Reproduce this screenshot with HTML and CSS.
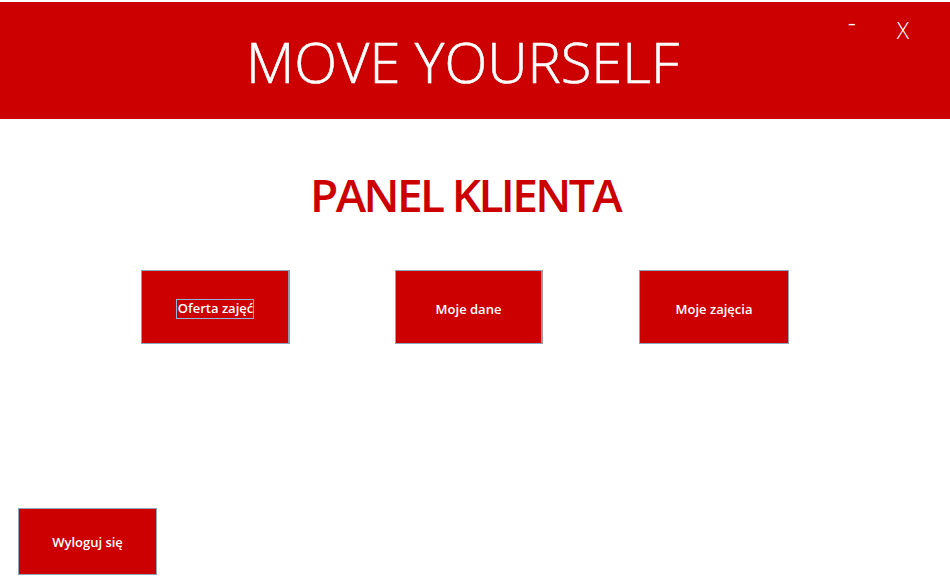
FILE: index.html
```html
<!DOCTYPE html>
<html lang="pl">
<head>
<meta charset="utf-8">
<title>Move Yourself - Panel klienta</title>
<link rel="stylesheet" href="styles.css">
</head>
<body>
<div class="window">
  <header class="header">
    <h1 class="brand">MOVE YOURSELF</h1>
    <div class="win-controls">
      <span class="win-min">-</span>
      <span class="win-close">X</span>
    </div>
  </header>
  <main class="panel">
    <h2 class="panel-title">PANEL KLIENTA</h2>
    <div class="actions">
      <button class="btn btn-offer"><span class="focus">Oferta zajęć</span></button>
      <button class="btn btn-data">Moje dane</button>
      <button class="btn btn-classes">Moje zajęcia</button>
    </div>
  </main>
  <footer class="footer">
    <button class="btn btn-logout">Wyloguj się</button>
  </footer>
</div>
</body>
</html>
```
FILE: styles.css
```css
html, body {
  margin: 0;
  padding: 0;
  background: #ffffff;
  width: 950px;
  height: 581px;
  overflow: hidden;
}
.window {
  padding-top: 2px;
  font-family: "Open Sans", "Noto Sans", sans-serif;
  display: flex;
  flex-direction: column;
  height: 579px;
}
.header {
  position: relative;
  background: #cc0000;
  height: 117px;
  display: flex;
  align-items: center;
  justify-content: center;
}
.brand {
  margin: 0 25px 0 0;
  color: #ffffff;
  font-weight: 300;
  font-size: 56px;
  line-height: 1;
  letter-spacing: 0;
  padding-top: 0;
  -webkit-text-stroke: 0.6px #ffffff;
}
.win-controls {
  position: absolute;
  top: 12px;
  right: 41px;
  display: flex;
  gap: 42px;
  color: #ffffff;
}
.win-min {
  font-size: 18px;
  line-height: 1;
  font-weight: 400;
  transform: scaleX(1.4);
}
.win-close {
  font-size: 23px;
  line-height: 1;
  font-weight: 300;
  padding-top: 5px;
}
.panel {
  display: flex;
  flex-direction: column;
}
.panel-title {
  margin: 45px 20px 0 0;
  text-align: center;
  color: #cc0000;
  font-weight: 600;
  font-size: 46px;
  line-height: 60px;
  letter-spacing: -2.6px;
}
.actions {
  display: flex;
  margin-top: 46px;
  padding-left: 141px;
}
.btn {
  box-sizing: border-box;
  background: #cc0000;
  color: #ffffff;
  font-family: "Open Sans", "Noto Sans", sans-serif;
  font-weight: 600;
  font-size: 13px;
  border: 1px solid #8ea4bd;
  padding: 3px 0 0;
  height: 74px;
  display: flex;
  align-items: center;
  justify-content: center;
}
.btn-offer {
  width: 149px;
  border-right: 2px solid #8e9cab;
}
.btn-data {
  width: 148px;
  margin-left: 105px;
  border-right: 2px solid #9a9aa0;
}
.btn-classes {
  width: 150px;
  margin-left: 96px;
}
.focus {
  border: 1px solid #8eb6d8;
  padding: 0 0 1px 1px;
  line-height: 17px;
}
.footer {
  margin-top: auto;
  padding: 0 0 6px 18px;
}
.btn-logout {
  width: 139px;
  height: 67px;
  padding-top: 1px;
}
```
